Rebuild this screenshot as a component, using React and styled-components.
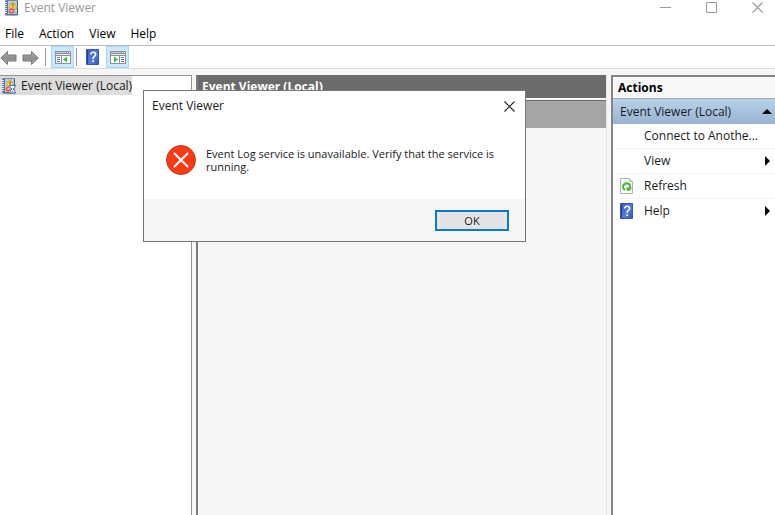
import React from "react";
import styled, { createGlobalStyle } from "styled-components";

const actions = [
  { id: 1, title: "Connect to Anothe..." },
  { id: 2, title: "View", menu: true },
  { id: 3, title: "Refresh", icon: <RefreshIcon /> },
  { id: 4, title: "Help", icon: <HelpIcon />, menu: true },
];

const menus = ["File", "Action", "View", "Help"];

export default function App() {
  return (
    <Window>
      <GlobalStyle />
      <TitleBar>
        <LogIcon />
        <h1>Event Viewer</h1>
        <CaptionButtons>
          <CaptionButton aria-label="Minimize">
            <svg width="11" height="11" viewBox="0 0 11 11">
              <path d="M0 5.5h11" stroke="#999" />
            </svg>
          </CaptionButton>
          <CaptionButton aria-label="Maximize">
            <svg width="11" height="11" viewBox="0 0 11 11">
              <path d="M.5.5h10v10H.5z" fill="none" stroke="#999" />
            </svg>
          </CaptionButton>
          <CaptionButton aria-label="Close">
            <CloseIcon color="#999" />
          </CaptionButton>
        </CaptionButtons>
      </TitleBar>

      <MenuBar>
        {menus.map((item) => (
          <button key={item}>{item}</button>
        ))}
      </MenuBar>

      <ToolBar>
        <ArrowButton aria-label="Back">
          <ArrowIcon />
        </ArrowButton>
        <ArrowButton aria-label="Forward">
          <ArrowIcon forward />
        </ArrowButton>
        <Divider />
        <ToolButton $active aria-label="Show or hide console tree">
          <PaneIcon />
        </ToolButton>
        <Divider />
        <ToolButton aria-label="Help">
          <HelpIcon />
        </ToolButton>
        <ToolButton $active aria-label="Show or hide action pane">
          <PaneIcon right />
        </ToolButton>
      </ToolBar>

      <Panes>
        <TreePane>
          <TreeItem>
            <LogIcon hourglass />
            <span>Event Viewer (Local)</span>
          </TreeItem>
        </TreePane>

        <ContentPane>
          <ContentTitle>Event Viewer (Local)</ContentTitle>
          <ContentBand />
        </ContentPane>

        <ActionPane>
          <ActionTitle>Actions</ActionTitle>
          <ActionGroup>
            Event Viewer (Local)
            <svg width="10" height="5" viewBox="0 0 10 5">
              <path d="M0 5 5 0l5 5z" />
            </svg>
          </ActionGroup>
          <ul>
            {actions.map((action) => (
              <li key={action.id}>
                <ActionButton>
                  <ActionIcon>{action.icon}</ActionIcon>
                  <span>{action.title}</span>
                  {action.menu && (
                    <svg width="5" height="10" viewBox="0 0 5 10">
                      <path d="M0 0l5 5-5 5z" />
                    </svg>
                  )}
                </ActionButton>
              </li>
            ))}
          </ul>
        </ActionPane>
      </Panes>

      <Dialog role="alertdialog" aria-labelledby="dialog-title">
        <DialogHeader>
          <h2 id="dialog-title">Event Viewer</h2>
          <button aria-label="Close">
            <CloseIcon color="#222" />
          </button>
        </DialogHeader>
        <DialogBody>
          <ErrorIcon />
          <p>
            Event Log service is unavailable. Verify that the service is
            running.
          </p>
        </DialogBody>
        <DialogFooter>
          <OkButton>OK</OkButton>
        </DialogFooter>
      </Dialog>
    </Window>
  );
}

function CloseIcon({ color }) {
  return (
    <svg width="11" height="11" viewBox="0 0 11 11">
      <path d="M.5.5l10 10M10.5.5l-10 10" stroke={color} strokeWidth="1.1" />
    </svg>
  );
}

function ErrorIcon() {
  return (
    <svg width="30" height="30" viewBox="0 0 30 30">
      <circle cx="15" cy="15" r="14.5" fill="#f93a12" stroke="#c43a20" />
      <path d="M8 8l14 14M22 8L8 22" stroke="#fff" strokeWidth="2" />
    </svg>
  );
}

function LogIcon({ hourglass }) {
  return (
    <svg width="16" height="16" viewBox="0 0 16 16">
      <path d="M2.5.5h12v14h-12z" fill="#bccde2" stroke="#7188a8" />
      <path d="M3 1h2v13H3z" fill="#56749f" />
      <path d="M6 3.5h8M6 6.5h8M6 9.5h8M6 12.5h8" stroke="#9db1cc" />
      <path
        d="M1 2.5h3M1 4.5h3M1 6.5h3M1 8.5h3M1 10.5h3M1 12.5h3"
        stroke="#dfe6ee"
      />
      <path d="M14.5 1v14H3" fill="none" stroke="#47628c" />
      <path d="M10 1.500l4 6.500H6z" fill="#ffdc3c" stroke="#dfb32b" />
      <path d="M10 3.500v2.500M10 6.500v1" stroke="#4d431a" />
      <circle cx="8.500" cy="11" r="2.800" fill="#df5a50" />
      <path d="M7.500 10l2 2M9.500 10l-2 2" stroke="#f8dada" />
      {hourglass && (
        <g>
          <path d="M9 7h7v2l-2 2 2 3v1H9v-1l2-3-2-2z" fill="#fff" />
          <path
            d="M9 7.500h7M9 15h7M10 8v1.500l2 1.500-2 2v2M15 8v1.500l-2 1.500 2 2v2"
            fill="none"
            stroke="#3975b5"
          />
          <path d="M11 14.500l1.500-2 1.500 2z" fill="#c8883c" />
        </g>
      )}
    </svg>
  );
}

function ArrowIcon({ forward }) {
  return (
    <svg width="17" height="16" viewBox="0 0 17 16">
      <defs>
        <linearGradient id="arrow" x1="0" y1="0" x2="0" y2="1">
          <stop offset="0" stopColor="#bdbdbd" />
          <stop offset=".5" stopColor="#8b8b8b" />
          <stop offset="1" stopColor="#b0b0b0" />
        </linearGradient>
      </defs>
      <path
        d="M.8 8L7.500 1.500V5H16v6H7.500v3.500z"
        fill="url(#arrow)"
        stroke="#777"
        strokeLinejoin="round"
        transform={forward ? "matrix(-1 0 0 1 17 0)" : undefined}
      />
    </svg>
  );
}

function PaneIcon({ right }) {
  return (
    <svg width="16" height="13" viewBox="0 0 16 13">
      <path d="M0 0h16v13H0z" fill="#8c9298" />
      <path d="M1 1.500h10" stroke="#c3c8cc" />
      <path d="M12 1.500h1M14 1.500h1" stroke="#fff" />
      <path d="M1 3.500h14" stroke="#e6e8ea" />
      <path
        d={right ? "M1 5h8v7H1zM10 5h5v7h-5z" : "M1 5h5v7H1zM7 5h8v7H7z"}
        fill="#fff"
      />
      <path
        d={
          right ? "M11 6.5h3M11 8.5h3M11 10.5h3" : "M2 6.5h3M2 8.5h3M2 10.5h3"
        }
        stroke="#5b82ae"
      />
      <path
        d={right ? "M4 5.500l4 3-4 3z" : "M12 5.500l-4 3 4 3z"}
        fill="#3dbb32"
      />
    </svg>
  );
}

function HelpIcon() {
  return (
    <svg width="13" height="16" viewBox="0 0 13 16">
      <defs>
        <linearGradient id="book" x1="0" y1="0" x2="1" y2="1">
          <stop offset="0" stopColor="#3a5fc9" />
          <stop offset=".6" stopColor="#5579dc" />
          <stop offset="1" stopColor="#2f53b6" />
        </linearGradient>
      </defs>
      <path d="M.5.5h12v15H.5z" fill="url(#book)" stroke="#3556b2" />
      <path d="M1.500 1v14" stroke="#263e91" />
      <path
        d="M4.800 5.500V5Q5 3.200 7.200 3.200T9.600 5.200Q9.600 6.500 8.300 7.400T7.200 10"
        fill="none"
        stroke="#fff"
        strokeWidth="1.600"
      />
      <path d="M6.300 11.300h1.800v1.800H6.300z" fill="#fff" />
    </svg>
  );
}

function RefreshIcon() {
  return (
    <svg width="14" height="16" viewBox="0 0 14 16">
      <path d="M.5.5h9l3 3v12H.5z" fill="#fafcfa" stroke="#b0b0b0" />
      <path d="M9.500.5v3h3" fill="#e4e4e4" stroke="#bbb" />
      <path
        d="M5 12Q2.800 10.500 3 8.500T6.300 5.300Q10 5.300 10 8.500V10"
        fill="none"
        stroke="#45b838"
        strokeWidth="2"
      />
      <path d="M6.500 9.500H12L9.500 13l-3-.5z" fill="#45b838" />
    </svg>
  );
}

const GlobalStyle = createGlobalStyle`
  * {
    box-sizing: border-box;
    margin: 0;
    padding: 0;
  }

  body {
    font-family: "Open Sans", "Noto Sans", sans-serif;
    font-size: 12px;
    line-height: 16px;
    color: #1a1a1a;
  }

  button {
    font: inherit;
    color: inherit;
    background: none;
    border: none;
  }

  svg {
    display: block;
    flex: none;
  }
`;

const Window = styled.div`
  position: relative;
  display: flex;
  flex-direction: column;
  min-height: 100vh;
  background: #fff;
`;

const TitleBar = styled.header`
  display: flex;
  align-items: flex-start;
  height: 22px;
  padding-left: 3px;

  h1 {
    margin-left: 5px;
    font-size: 12px;
    font-weight: 400;
    color: #999;
  }
`;

const CaptionButtons = styled.div`
  display: flex;
  margin-left: auto;
`;

const CaptionButton = styled.button`
  display: flex;
  justify-content: center;
  width: 46px;
  padding: 2px 0;

  &:last-child {
    width: 41px;
    padding-left: 5px;
  }
`;

const MenuBar = styled.nav`
  display: flex;
  gap: 15px;
  height: 24px;
  padding: 4px 5px;
  border-bottom: 1px solid #b9bcbe;
  color: #000;
`;

const ToolBar = styled.div`
  display: flex;
  align-items: center;
  height: 23px;
  border-bottom: 1px solid #dedede;
`;

const ToolButton = styled.button`
  display: flex;
  align-items: center;
  justify-content: center;
  width: 23px;
  height: 22px;
  margin-right: 2px;
  background: ${(props) => (props.$active ? "#cce8ff" : "none")};
  border: ${(props) => (props.$active ? "1px solid #a5d8fa" : "none")};
`;

const ArrowButton = styled.button`
  width: 17px;
  padding-top: 2px;

  & + & {
    margin-left: 5px;
  }
`;

const Divider = styled.span`
  width: 1px;
  height: 18px;
  margin-right: 4px;
  background: #999;

  ${ArrowButton} + & {
    margin: 0 5px 0 6px;
  }
`;

const Panes = styled.main`
  flex: 1;
  display: grid;
  grid-template-columns: 192px 1fr 164px;
  column-gap: 4px;
  padding-top: 6px;
  background: #f6f6f6;
`;

const TreePane = styled.section`
  background: #fff;
  border: 1px solid #92929d;
  border-left: none;
  border-bottom: none;
`;

const TreeItem = styled.div`
  display: inline-flex;
  align-items: center;
  height: 19px;
  background: #dcdcdc;

  span {
    margin-left: 5px;
  }
`;

const ContentPane = styled.section`
  border-left: 2px solid #7b7b7b;
  border-right: 1px solid #e6e6e6;
`;

const ContentTitle = styled.h2`
  height: 23px;
  padding: 4px;
  background: #6b6b6b;
  color: #fff;
  font-size: 12px;
  font-weight: 700;
`;

const ContentBand = styled.div`
  height: 28px;
  margin-top: 2px;
  background: #a5a5a5;
  border-top: 1px solid #696969;
`;

const ActionPane = styled.aside`
  background: #fff;
  border-top: 2px solid #858585;
  border-left: 2px solid #858585;

  ul {
    list-style: none;
  }

  li {
    margin-left: 5px;
    border-bottom: 1px solid #f2f2f2;
  }

  li:last-child {
    border-bottom: none;
  }
`;

const ActionTitle = styled.h2`
  height: 22px;
  padding: 3px 5px;
  background: #f8f8f8;
  border-bottom: 1px solid #aaa;
  font-size: 12px;
  font-weight: 700;
  color: #000;
`;

const ActionGroup = styled.h3`
  display: flex;
  align-items: center;
  justify-content: space-between;
  height: 25px;
  padding: 0 3px 0 7px;
  background: linear-gradient(#b9d1ea, #98b4d2);
  font-size: 12px;
  font-weight: 400;
`;

const ActionButton = styled.button`
  display: flex;
  align-items: center;
  width: 100%;
  height: 24px;
  padding-right: 5px;
  text-align: left;
  white-space: nowrap;

  span:nth-child(2) {
    flex: 1;
  }
`;

const ActionIcon = styled.span`
  width: 26px;
  padding-left: 2px;
`;

const Dialog = styled.section`
  position: absolute;
  top: 90px;
  left: 143px;
  width: 383px;
  background: #fff;
  border: 1px solid #777;
`;

const DialogHeader = styled.header`
  display: flex;
  align-items: center;
  justify-content: space-between;
  height: 30px;
  padding: 0 10px 0 8px;

  h2 {
    font-size: 12px;
    font-weight: 400;
  }
`;

const DialogBody = styled.div`
  display: flex;
  gap: 10px;
  height: 78px;
  padding: 24px 24px 0 22px;

  p {
    padding-top: 2px;
    font-size: 11px;
    line-height: 13px;
  }
`;

const DialogFooter = styled.footer`
  display: flex;
  justify-content: flex-end;
  padding: 11px 16px 10px;
  background: #f6f6f6;
`;

const OkButton = styled.button`
  width: 74px;
  height: 21px;
  background: #e4e4e4;
  border: 2px solid #0a7ad1;
  font-size: 11px;
  line-height: 16px;
`;
